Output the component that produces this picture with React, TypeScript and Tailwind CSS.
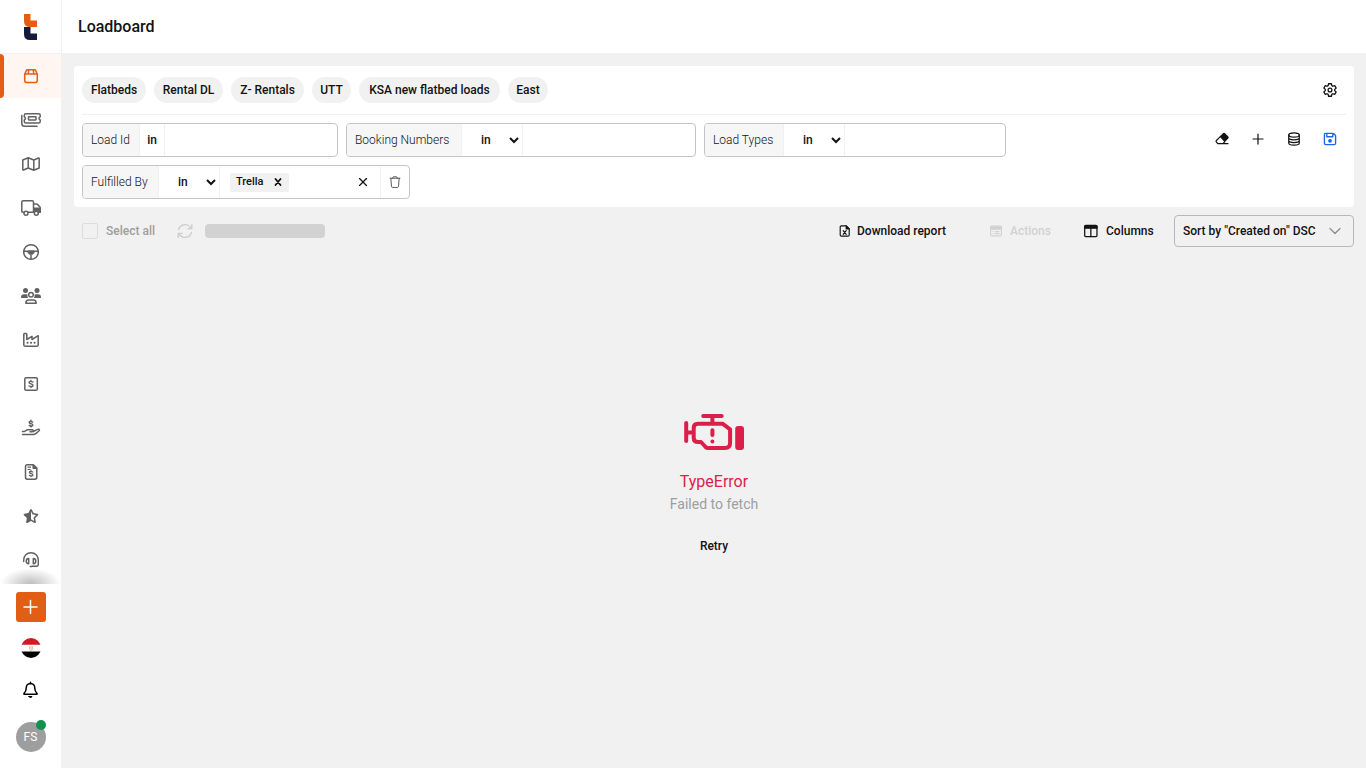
import type { ReactNode } from "react";
import { FaStarHalfStroke } from "react-icons/fa6";

function Glyph({ children, size = "size-5", width = 1.5 }: { children: ReactNode; size?: string; width?: number }) {
  return (
    <svg
      viewBox="0 0 20 20"
      className={`${size} shrink-0`}
      fill="none"
      stroke="currentColor"
      strokeWidth={width}
      strokeLinecap="round"
      strokeLinejoin="round"
      aria-hidden="true"
    >
      {children}
    </svg>
  );
}

const navItems: { label: string; icon: ReactNode }[] = [
  {
    label: "Loads",
    icon: (
      <Glyph>
        <path d="M3.7 8.2 5.4 4.4q.3-.7 1-.7h7.2q.7 0 1 .7l1.700 3.800v6.400q0 1.800-1.800 1.800h-9q-1.800 0-1.800-1.800zM3.700 8h12.600M7.800 3.700 7.200 8M12.200 3.700l.6 4.300" />
      </Glyph>
    ),
  },
  {
    label: "Tickets",
    icon: (
      <Glyph>
        <path d="M.8 5.5v8q0 2.800 2.800 2.800H16M4.900 3.700h12.700q1.600 0 1.600 1.600v1.400a1.700 1.700 0 0 0 0 3.200v1.600q0 1.600-1.600 1.600H4.900q-1.600 0-1.600-1.600V9.900a1.700 1.700 0 0 0 0-3.200V5.300q0-1.600 1.600-1.600z" />
        <rect x="7.500" y="6.700" width="7.500" height="3.300" rx=".4" />
      </Glyph>
    ),
  },
  {
    label: "Map",
    icon: (
      <Glyph>
        <path d="m1.800 6 5.400-2.200 5.600 2.200 4.700-2q.7-.2.7.5V14l-5.400 2.200L7.200 14l-4.700 2q-.7.200-.7-.5zM7.200 3.800V14M12.800 6v10.200" />
      </Glyph>
    ),
  },
  {
    label: "Trucks",
    icon: (
      <Glyph>
        <path d="M2.500 14.300h-.3q-1.400 0-1.400-1.400V4.200q0-1.400 1.400-1.400h8.900q1.400 0 1.400 1.400v10.100H7.400M12.500 6h2.900q.6 0 1 .4l2.400 2.400q.4.400.4 1v4.500h-1" />
        <path d="M13 10.200h6v4h-1.600a2.500 2.500 0 0 0-4.400-1z" fill="currentColor" />
        <circle cx="5" cy="15.200" r="2" />
        <circle cx="15.300" cy="15.200" r="2" />
      </Glyph>
    ),
  },
  {
    label: "Drivers",
    icon: (
      <Glyph>
        <circle cx="10" cy="10" r="7.300" />
        <path d="M2.900 9.300h14.200M10 13v4" />
        <path d="M7.200 9.300h5.600v1.200L11.200 12H8.800l-1.600-1.500z" fill="currentColor" />
      </Glyph>
    ),
  },
  {
    label: "Teams",
    icon: (
      <Glyph>
        <g fill="currentColor" stroke="none">
          <circle cx="4.500" cy="4.500" r="2.500" />
          <circle cx="16" cy="4.500" r="2.500" />
          <path d="M0 11.200q0-3 3-3h2.600q.4 0 .8.200-.2 2.200.8 3.700H.8q-.8 0-.8-.9zM20 11.200q0-3-3-3h-2.600q-.4 0-.8.200.2 2.200-.8 3.700h6.400q.8 0 .8-.9z" />
        </g>
        <circle cx="10" cy="8.800" r="2.300" />
        <path d="M4.800 17.200q.1-3.200 3-3.200h4.400q2.900 0 3 3.200z" />
      </Glyph>
    ),
  },
  {
    label: "Facilities",
    icon: (
      <Glyph>
        <path d="M2.800 4.200q0-.8.800-.8H5q.8 0 .8.800v5.300l5.200-3.200v3.200l6.200-3.800v9q0 1.600-1.600 1.600H4.400q-1.600 0-1.600-1.600z" />
        <path d="M6.500 12.700h.1M10 12.700h.1M13.500 12.700h.1" strokeWidth="2" />
      </Glyph>
    ),
  },
  {
    label: "Pricing",
    icon: (
      <Glyph>
        <rect x="3.800" y="3.800" width="12.500" height="12.500" rx="1.300" />
        <path d="M12 8q-3.900-1.500-3.900.5 0 .9 1.900 1.400 2 .5 2 1.500 0 2-4 .5M10 6.500v.8M10 12.700v.8" strokeWidth="1.400" />
      </Glyph>
    ),
  },
  {
    label: "Payments",
    icon: (
      <Glyph>
        <path d="M11.700 4Q8.200 2.800 8.200 4.500q0 .8 1.800 1.200 1.800.5 1.800 1.300 0 1.700-3.600.5M10 2.200V3M10 8.200V9" strokeWidth="1.400" />
        <path d="M1.500 13.500h2l1.700-1.200q.7-.5 1.500-.5h4.600q1.100 0 1.100 1t-1.100 1H9M12.400 13.500l3.600-1.800q1.300-.7 2.200-.2.700.7-.3 1.500l-3.200 2.600q-1 .9-2.300.9H1.500" />
      </Glyph>
    ),
  },
  {
    label: "Invoices",
    icon: (
      <Glyph>
        <path d="M6.300 2.800h5.900l3.600 3.500v9q0 1.900-1.900 1.900H6.300q-1.800 0-1.800-1.900V4.700q0-1.900 1.800-1.900z" />
        <path d="M12.200 2.800v3.500h3.600z" fill="currentColor" />
        <path d="M7 5.200h2.500M7 7.500h2.200" strokeWidth="1.200" />
        <path d="M11.800 10q-3.400-1.200-3.400.4 0 .8 1.700 1.200 1.800.5 1.800 1.300 0 1.700-3.500.4M10.100 8.700v.6M10.100 13.900v.6" strokeWidth="1.300" />
      </Glyph>
    ),
  },
  { label: "Ratings", icon: <FaStarHalfStroke className="size-4" aria-hidden="true" /> },
  {
    label: "Support",
    icon: (
      <Glyph>
        <path d="M2.700 11.500V10a7.300 7.300 0 0 1 14.600 0v4.300q0 2-2 2H11" strokeWidth="1.400" />
        <path d="M7.700 8.500v5.200q-2.500 0-2.500-2.600t2.500-2.600zM12.300 8.500v5.200q2.500 0 2.500-2.600t-2.500-2.600zM9.200 16.600h1.800" />
      </Glyph>
    ),
  },
];

const views = [
  { name: "Flatbeds", width: "w-16" },
  { name: "Rental DL", width: "w-[69px]" },
  { name: "Z- Rentals", width: "w-[73px]" },
  { name: "UTT", width: "w-[39px]" },
  { name: "KSA new flatbed loads", width: "w-[141px]" },
  { name: "East", width: "w-10" },
];

function Sidebar() {
  return (
    <aside className="flex w-[62px] shrink-0 flex-col border-r border-[#f1f1f1] bg-white">
      <a href="#home" aria-label="Home" className="flex h-[54px] shrink-0 items-center justify-center border-b border-[#f1f1f1]">
        <svg viewBox="0 0 13 26" className="h-[26px] w-[13px]" aria-hidden="true">
          <path d="M0 0h6.500v6.500H13V13H6Q0 13 0 7z" fill="#e35e15" />
          <path d="M0 13h6.500v6.500H13V26H6Q0 26 0 20z" fill="#151c3b" />
        </svg>
      </a>
      <nav aria-label="Main" className="relative min-h-0 flex-1 overflow-hidden">
        {navItems.map((item, i) => (
          <a
            key={item.label}
            href={`#${item.label.toLowerCase()}`}
            aria-label={item.label}
            className={
              i === 0
                ? "relative flex h-11 items-center justify-center bg-[#fff5f1] text-[#e35e15]"
                : "flex h-11 items-center justify-center text-[#616161]"
            }
          >
            {i === 0 && <span className="absolute inset-y-0 left-0 w-1 rounded-r bg-[#e35e15]" />}
            {item.icon}
          </a>
        ))}
        <div className="pointer-events-none absolute inset-x-0 bottom-0 h-4 bg-[radial-gradient(ellipse_at_bottom,rgba(0,0,0,0.26),transparent_70%)]" />
      </nav>
      <div className="flex shrink-0 flex-col items-center pt-2 pb-4">
        <button type="button" aria-label="Create" className="flex size-[30px] items-center justify-center rounded-[3px] bg-[#e35e15] text-white">
          <Glyph>
            <path d="M9.500 3.500v13M3 10h13" />
          </Glyph>
        </button>
        <button type="button" aria-label="Country: Egypt" className="mt-4">
          <svg viewBox="0 0 20 20" className="size-5" aria-hidden="true">
            <clipPath id="flag">
              <circle cx="10" cy="10" r="10" />
            </clipPath>
            <g clipPath="url(#flag)">
              <path d="M0 0h20v20H0z" fill="#fff" />
              <path d="M0 0h20v6.700H0z" fill="#ce1b26" />
              <path d="M0 13.500h20V20H0z" fill="#000" />
              <path d="M8.500 8.300v3M11.500 8.300v3M10 8v3.500M8.700 12h2.600" stroke="#d9b36b" strokeWidth=".8" />
            </g>
          </svg>
        </button>
        <button type="button" aria-label="Notifications" className="mt-[22px] text-black">
          <Glyph>
            <path d="M9.500 2.300v1.200M9.500 3.500q-4.300.2-4.300 4.800 0 3.200-2.200 5v.9h13v-.9q-2.200-1.800-2.200-5 0-4.600-4.300-4.800z" />
            <path d="M8 16.500h3q-.3 1-1.500 1t-1.500-1z" fill="currentColor" strokeWidth="1" />
          </Glyph>
        </button>
        <button type="button" aria-label="Account" className="relative mt-[22px] flex size-[30px] items-center justify-center rounded-full bg-[#9e9e9e] text-xs text-white">
          FS
          <span className="absolute -top-0.5 right-0 size-2.5 rounded-full bg-[#0f9150]" />
        </button>
      </div>
    </aside>
  );
}

type FilterProps = { label: string; width: string; labelWidth: string; fixed?: boolean; children?: ReactNode };

function Filter({ label, width, labelWidth, fixed, children }: FilterProps) {
  const id = label.toLowerCase().replace(/ /g, "-");
  return (
    <div className={`flex h-[34px] overflow-hidden rounded border border-[#c4c4c4] bg-white ${width}`}>
      <label
        htmlFor={id}
        className={`flex shrink-0 items-center border-r border-[#f1f1f1] bg-[#f6f6f6] pl-2 text-xs font-light whitespace-nowrap ${labelWidth}`}
      >
        {label}
      </label>
      {fixed ? (
        <span className="flex w-[25px] shrink-0 items-center justify-center border-r border-[#f1f1f1] text-xs font-medium">in</span>
      ) : (
        <select aria-label={`${label} operator`} className="w-[61px] shrink-0 border-r border-[#f1f1f1] bg-white pl-[15px] text-xs font-medium">
          <option>in</option>
        </select>
      )}
      {children}
      <input id={id} className="w-0 min-w-0 flex-1 px-2 text-xs outline-none" />
      {children && (
        <>
          <button type="button" aria-label="Clear value" className="flex w-[34px] shrink-0 items-center justify-center">
            <Glyph size="size-4" width={1.6}>
              <path d="m5.700 5.700 8.600 8.600M14.300 5.700l-8.600 8.600" />
            </Glyph>
          </button>
          <button type="button" aria-label="Remove filter" className="flex w-[29px] shrink-0 items-center justify-center border-l border-[#f1f1f1] text-[#555]">
            <Glyph size="size-4" width={1.2}>
              <path d="M3.800 5.300h12.400M7 5.300l.8-1.800h4.400l.8 1.800M4.800 5.300l.8 10q.1 1.500 1.500 1.500h5.800q1.400 0 1.500-1.500l.8-10" />
            </Glyph>
          </button>
        </>
      )}
    </div>
  );
}

const iconButton = "flex size-8 items-center justify-center";

function FilterPanel() {
  return (
    <section className="rounded bg-white px-2 pb-2">
      <div className="flex h-[49px] items-center justify-between border-b border-[#f1f1f1]">
        <div className="flex gap-2">
          {views.map((v) => (
            <button key={v.name} type="button" className={`h-[26px] rounded-full bg-[#f1f1f1] text-xs font-medium whitespace-nowrap ${v.width}`}>
              {v.name}
            </button>
          ))}
        </div>
        <button type="button" aria-label="View settings" className={iconButton}>
          <Glyph size="size-4" width={1.6}>
            <path d="M8.200 2.200h3.600l.5 2.300 1.300.8 2.300-.8 1.800 3.100-1.800 1.600v1.600l1.800 1.600-1.800 3.100-2.300-.8-1.300.8-.5 2.300H8.200l-.5-2.300-1.300-.8-2.300.8-1.800-3.100 1.800-1.600V9.200L2.300 7.600l1.800-3.100 2.300.8 1.300-.8z" />
            <circle cx="10" cy="10" r="2.400" />
          </Glyph>
        </button>
      </div>
      <div className="flex items-start justify-between gap-2 pt-2">
        <div className="flex min-w-0 flex-1 flex-wrap gap-2">
          <Filter label="Load Id" width="w-[256px]" labelWidth="w-[57px]" fixed />
          <Filter label="Booking Numbers" width="w-[350px]" labelWidth="w-[115px]" />
          <Filter label="Load Types" width="w-[302px]" labelWidth="w-[79px]" />
          <Filter label="Fulfilled By" width="w-[328px]" labelWidth="w-[76px]">
            <span className="ml-2.5 flex h-[19px] w-[59px] shrink-0 items-center justify-between self-center rounded-xs bg-[#f1f1f1] px-1.5 text-[11px] font-medium">
              Trella
              <button type="button" aria-label="Remove Trella">
                <Glyph size="size-2.5" width={3.6}>
                  <path d="m5 4 10 12M15 4 5 16" />
                </Glyph>
              </button>
            </span>
          </Filter>
        </div>
        <div className="flex shrink-0 gap-1">
          <button type="button" aria-label="Clear filters" className={iconButton}>
            <Glyph size="size-4">
              <path d="M7.600 7.300 3 11.900q-1 1 0 2l2 2h6l2.300-2.300M11 15.900h6.500" />
              <path d="m8 7 3.700-3.700q.8-.8 1.600 0l4 4q.8.800 0 1.600L13.400 12.800z" fill="currentColor" />
            </Glyph>
          </button>
          <button type="button" aria-label="Add filter" className={iconButton}>
            <Glyph size="size-4">
              <path d="M10 3.800v12.500M3.800 10h12.500" />
            </Glyph>
          </button>
          <button type="button" aria-label="Data source" className={iconButton}>
            <Glyph size="size-4">
              <ellipse cx="10" cy="5" rx="6.600" ry="2.700" />
              <path d="M3.400 5v10q0 2.700 6.600 2.700t6.600-2.700V5M3.400 8.500q0 2.500 6.600 2.500t6.600-2.500M3.400 12q0 2.500 6.600 2.500t6.600-2.500" />
            </Glyph>
          </button>
          <button type="button" aria-label="Save view" className={`${iconButton} text-[#1d66e5]`}>
            <Glyph size="size-4" width={1.7}>
              <path d="M4.300 3h9.300q.6 0 1 .4l2 2q.4.400.4 1v8.800q0 1.800-1.800 1.800H4.800Q3 17 3 15.200V4.300Q3 3 4.300 3zM6 3v4.200h7.500V3" />
              <circle cx="10" cy="12.200" r="1.500" fill="currentColor" />
            </Glyph>
          </button>
        </div>
      </div>
    </section>
  );
}

function Toolbar() {
  return (
    <div className="mt-2 flex h-8 items-center pl-2 text-xs font-medium whitespace-nowrap">
      <label className="flex items-center gap-2 text-[#9e9e9e]">
        <input type="checkbox" disabled className="size-4 appearance-none rounded-xs border border-[#dcdcdc]" />
        Select all
      </label>
      <button type="button" disabled aria-label="Refresh" className="ml-[22px] text-[#cfcfcf]">
        <Glyph size="size-4" width={1.8}>
          <path d="M2 8.200a8.300 8.300 0 0 1 15.300-1.800M18.500 2v5h-5M18 11.800a8.300 8.300 0 0 1-15.300 1.800M1.500 18v-5h5" />
        </Glyph>
      </button>
      <span className="ml-3 h-3.5 w-[120px] rounded bg-[#d2d2d2]" />
      <button type="button" className="ml-auto flex w-[111px] items-center gap-1.5">
        <Glyph size="size-3" width={1.9}>
          <path d="M4 1.500h8l5 5v10q0 2-2 2H4q-2 0-2-2v-13q0-2 2-2z" />
          <path d="M12 1.500v5h5z" fill="currentColor" />
          <path d="m7 9.500 5 6M12 9.500l-5 6" />
        </Glyph>
        Download report
      </button>
      <button type="button" disabled className="ml-10 flex w-[62px] items-center gap-2 text-[#d2d2d2]">
        <Glyph size="size-3" width={2}>
          <rect x="1" y="2" width="18" height="16" rx="2" />
          <path d="M1 3h18v4H1z" fill="currentColor" />
          <path d="M5 11h.1M9 11h6M5 14.500h.1M9 14.500h6" />
        </Glyph>
        Actions
      </button>
      <button type="button" className="ml-8 flex w-[70px] items-center gap-2">
        <Glyph size="size-3.5" width={1.8}>
          <rect x="1" y="2" width="17.500" height="16" rx="1.500" />
          <path d="M1 3h17.500v3H1z" fill="currentColor" />
          <path d="M9.800 5v13" />
        </Glyph>
        Columns
      </button>
      <button type="button" className="ml-5 flex h-8 w-[180px] items-center justify-between rounded border border-[#b8b8b8] px-2">
        Sort by "Created on" DSC
        <Glyph size="size-5" width={1.2}>
          <path d="m5 7.500 5 5 5-5" stroke="#8a8a8a" />
        </Glyph>
      </button>
    </div>
  );
}

function ErrorState() {
  return (
    <div className="flex flex-1 flex-col items-center justify-center pb-7">
      <svg viewBox="0 0 60 36" className="h-9 w-[60px]" fill="none" stroke="#dc1e4b" strokeWidth="4" strokeLinecap="round" strokeLinejoin="round" aria-hidden="true">
        <path d="M2.200 9v18M2.200 18.500H9M19.200 2h18.500M28.400 2v7" />
        <path d="M14 9.700h24.500l7.600 5.600V29q0 5-5 5H24q-1.400 0-2.400-1l-4.600-5H14q-4.300 0-4.300-4.300V14q0-4.300 4.300-4.300z" />
        <path d="M28.400 16.300v4.700M28.400 27.600h.01" />
        <rect x="51.200" y="12" width="8.800" height="24" rx="3" fill="#dc1e4b" stroke="none" />
      </svg>
      <h2 className="mt-5 text-base leading-6 text-[#dc1e4b]">TypeError</h2>
      <p className="text-sm leading-5 text-[#9e9e9e]">Failed to fetch</p>
      <button type="button" className="mt-4 h-8 px-2 text-xs font-medium">
        Retry
      </button>
    </div>
  );
}

export default function App() {
  return (
    <div className="flex h-screen bg-[#f1f1f1] font-[Roboto,sans-serif] text-[#121212]">
      <Sidebar />
      <div className="flex min-w-0 flex-1 flex-col">
        <header className="flex h-[54px] shrink-0 items-center border-b border-[#f1f1f1] bg-white px-4">
          <h1 className="text-base font-medium">Loadboard</h1>
        </header>
        <main className="flex min-h-0 flex-1 flex-col p-3">
          <FilterPanel />
          <Toolbar />
          <ErrorState />
        </main>
      </div>
    </div>
  );
}
